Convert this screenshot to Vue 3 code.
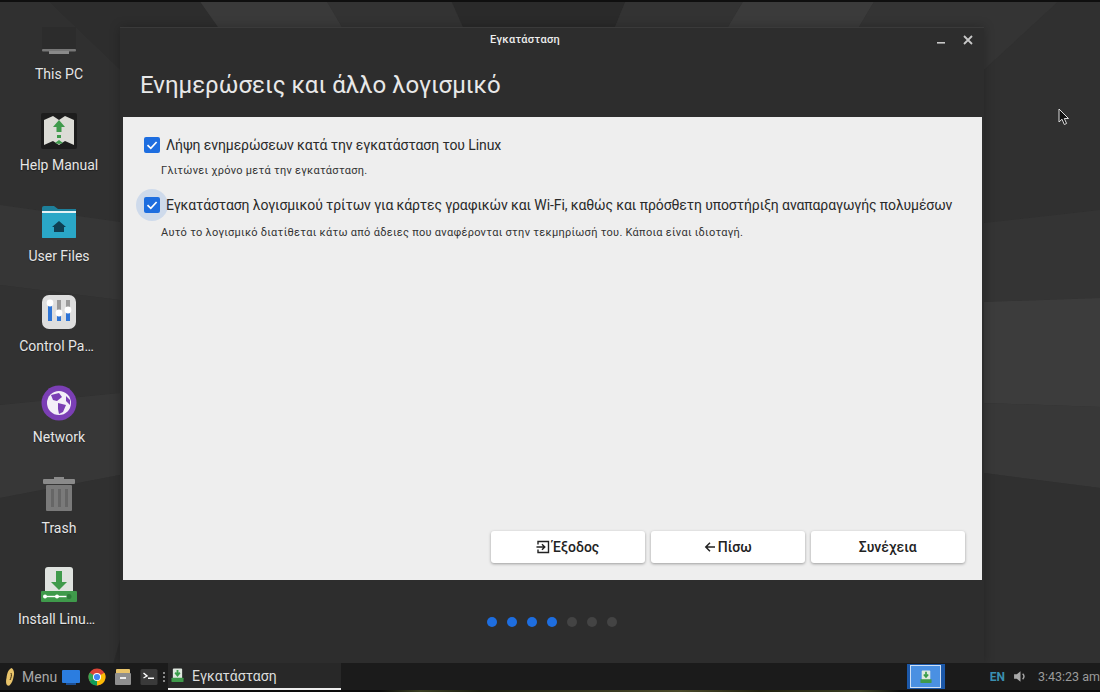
<template>
  <div class="desktop">
    <svg class="wallpaper" viewBox="0 0 1100 692" preserveAspectRatio="none">
      <rect width="1100" height="692" fill="#323232" />
      <!-- left side -->
      <polygon points="0,0 199,0 218,27 120,70 47,0" fill="#2d2d2d" />
      <polygon points="0,0 47,0 120,70 120,222 0,205" fill="#303030" />
      <polygon points="0,205 120,222 120,300 0,285" fill="#363636" />
      <polygon points="0,285 120,300 120,393 0,405" fill="#323232" />
      <polygon points="0,405 120,393 120,475 0,498" fill="#373737" />
      <polygon points="0,498 120,475 120,692 0,692" fill="#303030" />
      <polygon points="120,640 120,692 105,692" fill="#2a2a2a" />
      <!-- top bands -->
      <polygon points="199,0 326,0 342,27 218,27" fill="#3a3a3a" />
      <polygon points="326,0 451,0 463,27 342,27" fill="#333333" />
      <polygon points="451,0 626,0 615,27 463,27" fill="#2a2a2a" />
      <polygon points="626,0 744,0 728,27 615,27" fill="#333333" />
      <polygon points="744,0 875,0 859,27 728,27" fill="#3b3b3b" />
      <polygon points="875,0 1060,0 984,70 984,27 859,27" fill="#343434" />
      <!-- right side -->
      <polygon points="984,70 1060,0 1100,0 1100,210 984,223" fill="#303030" />
      <polygon points="984,223 1100,210 1100,298 984,302" fill="#343434" />
      <polygon points="984,302 1100,298 1100,407 984,403" fill="#3c3c3c" />
      <polygon points="984,403 1100,407 1100,488 984,473" fill="#383838" />
      <polygon points="984,473 1100,488 1100,692 984,692" fill="#303030" />
      <rect width="1100" height="2" fill="#0f0f0f" />
    </svg>

    <div class="icons">
      <div v-for="item in desktopIcons" :key="item.label" class="icon-item">
        <svg class="icon-img" viewBox="0 0 40 40" v-html="item.svg"></svg>
        <span :class="{ cut: item.label.endsWith('…') }">{{ item.label }}</span>
      </div>
    </div>

    <div class="window">
      <div class="titlebar">
        <span class="title">Εγκατάσταση</span>
        <svg class="win-btn min" viewBox="0 0 10 10"><rect x="1" y="7" width="8" height="1.6" fill="#c8c8c8" /></svg>
        <svg class="win-btn close" viewBox="0 0 10 10"><path d="M1 1 L9 9 M9 1 L1 9" stroke="#c8c8c8" stroke-width="1.8" /></svg>
      </div>
      <h1>Ενημερώσεις και άλλο λογισμικό</h1>
      <div class="panel">
        <div class="options">
          <div class="check-row">
            <span class="check">
              <svg viewBox="0 0 16 16"><path d="M3.5 8.2 L6.8 11.3 L12.6 5" fill="none" stroke="#fff" stroke-width="1.7" /></svg>
            </span>
            <span class="check-label">Λήψη ενημερώσεων κατά την εγκατάσταση του Linux</span>
          </div>
          <p class="hint">Γλιτώνει χρόνο μετά την εγκατάσταση.</p>
          <div class="check-row">
            <span class="check focused">
              <svg viewBox="0 0 16 16"><path d="M3.5 8.2 L6.8 11.3 L12.6 5" fill="none" stroke="#fff" stroke-width="1.7" /></svg>
            </span>
            <span class="check-label">Εγκατάσταση λογισμικού τρίτων για κάρτες γραφικών και Wi-Fi, καθώς και πρόσθετη υποστήριξη αναπαραγωγής πολυμέσων</span>
          </div>
          <p class="hint second">Αυτό το λογισμικό διατίθεται κάτω από άδειες που αναφέρονται στην τεκμηρίωσή του. Κάποια είναι ιδιοταγή.</p>
        </div>
        <div class="buttons">
          <button>
            <svg viewBox="0 0 14 14" width="14" height="14"><path d="M2 4.5 V1.5 H12.5 V12.5 H2 V9.5 M0.5 7 H8.5 M6 4.2 L8.8 7 L6 9.8" fill="none" stroke="#222" stroke-width="1.4" /></svg>
            Έξοδος
          </button>
          <button>
            <svg viewBox="0 0 12 12" width="12" height="12"><path d="M11 6 H2 M6 1.8 L1.8 6 L6 10.2" fill="none" stroke="#222" stroke-width="1.5" /></svg>
            Πίσω
          </button>
          <button>Συνέχεια</button>
        </div>
      </div>
      <div class="dots">
        <span v-for="n in 7" :key="n" class="dot" :class="{ on: n <= 4 }"></span>
      </div>
    </div>

    <svg class="cursor" viewBox="0 0 12 18"><path d="M1 1 L1 14 L4 11.2 L6.3 16.5 L8.6 15.5 L6.3 10.5 L10.5 10.5 Z" fill="#111" stroke="#ddd" stroke-width="1" /></svg>

    <div class="taskbar">
      <svg class="tb-logo" viewBox="0 0 10 20"><path d="M6.5 1 C9.5 3 9.5 7 8.5 10 C8 13 7 16 4.5 18.5 C1 19.5 0.5 15 1.5 11 C2 7 3 2.5 6.5 1 Z" fill="#e8c36a" /><path d="M6 6 C7 8 6 11 5 13" fill="none" stroke="#3a2a10" stroke-width="1" /></svg>
      <span class="menu">Menu</span>
      <svg class="tb-icon first" viewBox="0 0 18 18"><rect x="0" y="2" width="18" height="13" rx="1" fill="#2b7de0" /><rect x="4" y="15" width="10" height="2" fill="#1d4f92" /></svg>
      <svg class="tb-icon" viewBox="0 0 18 18">
        <circle cx="9" cy="9" r="8.5" fill="#db4437" />
        <path d="M9 9 L1.6 13.2 A8.5 8.5 0 0 0 9 17.5 Z" fill="#0f9d58" />
        <path d="M9 9 L16.4 4.8 A8.5 8.5 0 0 1 9 17.5 Z" fill="#fbbc05" />
        <path d="M9 9 L1.6 13.2 A8.5 8.5 0 0 1 1.6 4.8 Z" fill="#34a853" />
        <circle cx="9" cy="9" r="4" fill="#fff" /><circle cx="9" cy="9" r="3.1" fill="#4285f4" />
      </svg>
      <svg class="tb-icon" viewBox="0 0 18 18"><rect x="2" y="1" width="14" height="5" rx="1" fill="#e9c46a" /><rect x="1" y="5" width="16" height="12" rx="1" fill="#8f8f8f" /><rect x="6" y="9" width="6" height="2" fill="#eee" /></svg>
      <svg class="tb-icon" viewBox="0 0 18 18"><rect x="0.5" y="1" width="17" height="16" rx="1.5" fill="#3a3a3a" /><path d="M3.5 5 L7 8 L3.5 10" fill="none" stroke="#fff" stroke-width="1.4" /><rect x="8" y="9.5" width="6" height="1.5" fill="#fff" /></svg>
      <span class="grip"></span>
      <div class="task">
        <svg viewBox="0 0 14 16" width="13" height="15"><rect x="2" y="0.5" width="10" height="11" rx="1" fill="#dfe8df" /><path d="M7 2 V7 M4.5 5 L7 8 L9.5 5" fill="none" stroke="#3a9d4a" stroke-width="2" /><rect x="0.5" y="10.5" width="13" height="4.5" rx="0.5" fill="#3f9a4b" /></svg>
        <span>Εγκατάσταση</span>
      </div>
      <div class="spacer"></div>
      <div class="pager">
        <span class="pager-cell">
          <svg viewBox="0 0 14 16" width="12" height="14"><rect x="2" y="0.5" width="10" height="11" rx="1" fill="#dfe8df" /><path d="M7 2 V7 M4.5 5 L7 8 L9.5 5" fill="none" stroke="#3a9d4a" stroke-width="2" /><rect x="0.5" y="10.5" width="13" height="4.5" rx="0.5" fill="#3f9a4b" /></svg>
        </span>
      </div>
      <span class="lang">EN</span>
      <svg class="vol" viewBox="0 0 14 14"><path d="M1 5 H3.5 L7 2 V12 L3.5 9 H1 Z" fill="#a8a8a8" /><path d="M9 4.5 C10.5 6 10.5 8 9 9.5" fill="none" stroke="#a8a8a8" stroke-width="1.3" /></svg>
      <span class="clock">3:43:23 am</span>
    </div>
    <div class="under"></div>
  </div>
</template>

<script setup>
const desktopIcons = [
  {
    label: 'This PC',
    svg: '<rect x="3" y="7" width="34" height="22" fill="#2c2c2c"/><rect x="3" y="29" width="34" height="2.5" rx="1" fill="#777"/><rect x="10" y="31" width="20" height="3" fill="#8a8a8a"/>',
  },
  {
    label: 'Help Manual',
    svg: '<rect x="2" y="2" width="36" height="36" rx="2" fill="#1d1d1d"/><path d="M5 9 L14 5 L20 9 L26 5 L35 9 V34 L26 30 L20 34 L14 30 L5 34 Z" fill="#dcdcd6"/><path d="M20 9 L26 16 H22.5 V21 H17.5 V16 H14 Z M18 24 H22 V27 H18 Z M20 29 L24 32 L20 33 L16 32 Z" fill="#3f9a4b"/>',
  },
  {
    label: 'User Files',
    svg: '<path d="M3 6 Q3 4 5 4 H15 L19 7 H37 V36 H3 Z" fill="#1d7f9a"/><rect x="3" y="9" width="34" height="2" fill="#e5f2f5"/><rect x="3" y="11" width="34" height="25" rx="1" fill="#2aa7c7"/><path d="M20 19 L27 25 H25 V30 H15 V25 H13 Z" fill="#0f3f52"/>',
  },
  {
    label: 'Control Pa…',
    svg: '<rect x="3" y="3" width="34" height="34" rx="7" fill="#dedede"/><rect x="9" y="11" width="4" height="18" fill="#2f75d6"/><rect x="18" y="8" width="4" height="12" fill="#999"/><rect x="18" y="22" width="4" height="7" fill="#2f75d6"/><rect x="27" y="8" width="4" height="10" fill="#999"/><rect x="27" y="20" width="4" height="9" fill="#2f75d6"/><circle cx="11" cy="11" r="3.4" fill="#fff"/><circle cx="20" cy="21" r="3.4" fill="#fff"/><circle cx="29" cy="18" r="3.4" fill="#fff"/>',
  },
  {
    label: 'Network',
    svg: '<circle cx="20" cy="20" r="17.5" fill="#7b3fb5"/><circle cx="20" cy="20" r="12" fill="#f3eff8"/><path d="M12 12 L20 10 L23 14 L18 18 L14 17 Z M19 20 L27 22 L24 29 L20 31 L19 26 Z M27 13 L31 17 L31 22 L27 18 Z" fill="#7b3fb5"/>',
  },
  {
    label: 'Trash',
    svg: '<rect x="4" y="5" width="32" height="5" rx="1" fill="#8a8a8a"/><rect x="15" y="3" width="10" height="3" fill="#8a8a8a"/><rect x="7" y="11" width="26" height="26" rx="1" fill="#7a7a7a"/><rect x="12" y="15" width="3" height="18" fill="#666"/><rect x="19" y="15" width="3" height="18" fill="#666"/><rect x="26" y="15" width="3" height="18" fill="#666"/>',
  },
  {
    label: 'Install Linu…',
    svg: '<rect x="6" y="2" width="28" height="30" rx="3" fill="#dfe3df"/><path d="M17 6 H23 V17 H28 L20 25 L12 17 H17 Z" fill="#3f9a4b"/><rect x="2" y="26" width="36" height="11" rx="1" fill="#3f9a4b"/><path d="M6 31.5 H30" stroke="#fff" stroke-width="1.4"/><circle cx="6" cy="31.5" r="2" fill="#fff"/><circle cx="18" cy="31.5" r="2" fill="#fff"/><circle cx="30" cy="31.5" r="2.5" fill="#2d7a39"/>',
  },
]
</script>

<style>
html, body {
  margin: 0;
  background: #323232;
}
</style>

<style scoped>
.desktop {
  position: relative;
  width: 1100px;
  height: 692px;
  overflow: hidden;
  font-family: Roboto, "Noto Sans", sans-serif;
}
.wallpaper {
  position: absolute;
  inset: 0;
  width: 100%;
  height: 100%;
}
.icons {
  position: absolute;
  left: 14px;
  top: 18px;
  width: 90px;
  display: flex;
  flex-direction: column;
}
.icon-item {
  height: 90.8px;
  display: flex;
  flex-direction: column;
  align-items: center;
  color: #e6e6e6;
  font-size: 14px;
  line-height: 17px;
  text-shadow: 0 1px 1px rgba(0, 0, 0, 0.4);
  white-space: nowrap;
}
.cut {
  margin-right: 5px;
}
.icon-img {
  width: 40px;
  height: 40px;
  margin-top: 2px;
  margin-bottom: 6px;
  overflow: visible;
}
.window {
  position: absolute;
  left: 120px;
  top: 27px;
  width: 864px;
  height: 636px;
  background: #2d2d2d;
  box-shadow: inset 0 1px 0 #3a3a3a, 0 0 10px rgba(0, 0, 0, 0.25);
  display: flex;
  flex-direction: column;
  align-items: stretch;
}
.titlebar {
  position: relative;
  height: 25px;
  box-sizing: border-box;
  padding-right: 54px;
  text-align: center;
  color: #eee;
  font-size: 11px;
  font-weight: 500;
  line-height: 25px;
  letter-spacing: 0.3px;
}
.win-btn {
  position: absolute;
  top: 8px;
  width: 10px;
  height: 10px;
}
.min { left: 816px; }
.close { left: 843px; }
h1 {
  margin: 0;
  padding: 7px 0 0 20px;
  height: 58px;
  box-sizing: border-box;
  font-size: 24px;
  font-weight: 400;
  line-height: 52px;
  color: #e8e8e8;
}
.panel {
  margin: 7px 2px 0 3px;
  height: 463px;
  background: #eeeeee;
  display: flex;
  flex-direction: column;
  justify-content: space-between;
  box-sizing: border-box;
  padding: 17px 17px 17px 21px;
}
.options {
  display: flex;
  flex-direction: column;
}
.check-row {
  display: flex;
  align-items: center;
  gap: 6px;
  height: 22px;
}
.check {
  position: relative;
  width: 16px;
  height: 16px;
  border-radius: 2px;
  background: #1e6ee0;
  flex-shrink: 0;
}
.check svg {
  position: absolute;
  inset: 0;
  width: 16px;
  height: 16px;
}
.focused::before {
  content: "";
  position: absolute;
  left: -8px;
  top: -8px;
  width: 32px;
  height: 32px;
  border-radius: 50%;
  background: rgba(30, 110, 224, 0.15);
}
.check-label {
  font-size: 14px;
  color: #2a2a2a;
  letter-spacing: -0.1px;
  white-space: nowrap;
}
.hint {
  margin: 7px 0 15px 17px;
  font-size: 11px;
  line-height: 16px;
  color: #333;
  letter-spacing: 0.28px;
  white-space: nowrap;
}
.hint.second {
  margin-top: 9px;
}
.buttons {
  display: flex;
  justify-content: flex-end;
  gap: 5.5px;
}
button {
  width: 154.5px;
  height: 32px;
  border: none;
  border-radius: 3px;
  background: #fff;
  box-shadow: 0 1px 3px rgba(0, 0, 0, 0.35);
  font-family: Roboto, "Noto Sans", sans-serif;
  font-size: 14px;
  font-weight: 500;
  color: #222;
  display: flex;
  align-items: center;
  justify-content: center;
  gap: 2px;
  padding: 0;
}
.dots {
  display: flex;
  justify-content: center;
  gap: 10px;
  margin-top: 37px;
}
.dot {
  width: 10px;
  height: 10px;
  border-radius: 50%;
  background: #444;
}
.dot.on {
  background: #1e6ee0;
}
.cursor {
  position: absolute;
  left: 1058px;
  top: 108px;
  width: 12px;
  height: 18px;
}
.taskbar {
  position: absolute;
  left: 0;
  right: 0;
  top: 663px;
  height: 27px;
  background: #1b1b1b;
  display: flex;
  align-items: center;
  color: #ccc;
  font-size: 14px;
}
.under {
  position: absolute;
  left: 0;
  right: 0;
  bottom: 0;
  height: 2px;
  background: linear-gradient(90deg, #0c0c0c 0 380px, #3a3f22 420px, #1a1c10 480px, #4a4a2a 680px, #20200f 760px, #3a3f22 860px, #0c0c0c 900px);
}
.tb-logo {
  width: 10px;
  height: 20px;
  margin-left: 5px;
}
.menu {
  margin-left: 7px;
  color: #a8a8a8;
  font-size: 14px;
}
.tb-icon {
  width: 18px;
  height: 18px;
  margin-left: 8px;
}
.tb-icon.first {
  margin-left: 5px;
}
.grip {
  height: 10px;
  margin-left: 5px;
  border-left: 2px dotted #888;
}
.task {
  width: 173px;
  height: 27px;
  box-sizing: border-box;
  margin-left: 3px;
  padding-left: 3px;
  background: #282828;
  border-bottom: 2px solid #eee;
  display: flex;
  align-items: center;
  gap: 8px;
  color: #ddd;
}
.spacer {
  flex: 1;
}
.pager {
  width: 38px;
  height: 25px;
  background: #1c58a8;
  display: flex;
  align-items: center;
  justify-content: center;
}
.pager-cell {
  width: 31px;
  height: 23px;
  border: 1px solid #cfe0f5;
  background: #4a90e2;
  box-sizing: border-box;
  display: flex;
  align-items: center;
  justify-content: center;
}
.lang {
  margin-left: 45px;
  color: #3a8fb0;
  font-size: 12px;
  font-weight: 700;
}
.vol {
  width: 15px;
  height: 15px;
  margin-left: 8px;
}
.clock {
  margin-left: 10px;
  font-size: 12.5px;
  color: #9a9a9a;
  white-space: nowrap;
}
</style>
